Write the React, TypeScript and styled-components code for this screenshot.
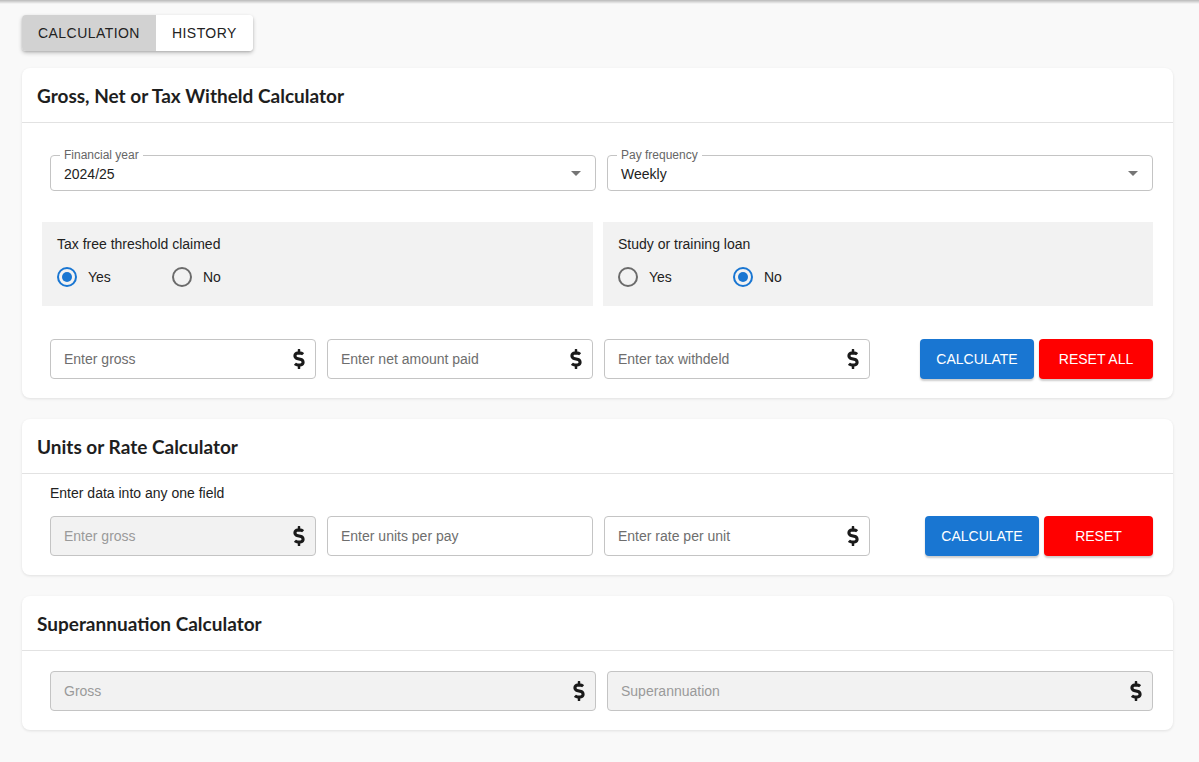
import { createGlobalStyle } from "styled-components";
import styled from "styled-components";
import { FaDollarSign } from "react-icons/fa";

const GlobalStyle = createGlobalStyle`
  html, body {
    margin: 0;
    padding: 0;
    background: #f9f9f9;
    font-family: "Liberation Sans", Arial, sans-serif;
    color: #212121;
  }
  * { box-sizing: border-box; }
`;

const TopShadow = styled.div`
  height: 4px;
  background: linear-gradient(#b9b9b9, #f9f9f9);
`;

const Page = styled.div`
  padding: 11px 26px 30px 22px;
  display: flex;
  flex-direction: column;
`;

const Tabs = styled.div`
  display: flex;
  align-self: flex-start;
  border-radius: 4px;
  overflow: hidden;
  box-shadow: 0 2px 4px rgba(0, 0, 0, 0.22), 0 1px 2px rgba(0, 0, 0, 0.12);
  margin-bottom: 17px;
`;

const Tab = styled.div<{ $active?: boolean }>`
  height: 36px;
  padding: 0 16px;
  display: flex;
  align-items: center;
  font-size: 14px;
  letter-spacing: 0.45px;
  color: #222;
  background: ${(p) => (p.$active ? "#d2d2d2" : "#ffffff")};
`;

const Card = styled.div`
  background: #fff;
  border-radius: 8px;
  box-shadow: 0 1px 3px rgba(0, 0, 0, 0.1);
  margin-bottom: 21px;
`;

const CardHeader = styled.div`
  height: 55px;
  padding: 0 15px;
  display: flex;
  align-items: center;
  border-bottom: 1px solid #e2e2e2;
  font-family: Lato, "Open Sans", sans-serif;
  font-weight: 700;
  font-size: 19px;
  color: #1e1e1e;
`;

const CardBody = styled.div<{ $top: number }>`
  padding: ${(p) => p.$top}px 20px 19px 28px;
  display: flex;
  flex-direction: column;
`;

const TwoCols = styled.div`
  display: grid;
  grid-template-columns: 1fr 1fr;
  gap: 11px;
`;

const Select = styled.div`
  position: relative;
  height: 36px;
  border: 1px solid #c4c4c4;
  border-radius: 4px;
  display: flex;
  align-items: center;
  padding: 2px 13px 0;
  font-size: 14px;
  color: #222;
`;

const FloatLabel = styled.span`
  position: absolute;
  top: -8px;
  left: 9px;
  padding: 0 4px;
  background: #fff;
  font-size: 12px;
  color: #666;
`;

const Arrow = styled.span`
  position: absolute;
  right: 14px;
  top: 15px;
  width: 0;
  height: 0;
  border-left: 5px solid transparent;
  border-right: 5px solid transparent;
  border-top: 5px solid #757575;
`;

const OptionsRow = styled.div`
  display: grid;
  grid-template-columns: 551px 1fr;
  gap: 10px;
  margin: 31px 0 33px -8px;
`;

const OptionBox = styled.div`
  background: #f2f2f2;
  height: 84px;
  padding: 14px 15px 0;
`;

const OptionTitle = styled.div`
  font-size: 14px;
  color: #222;
  margin-bottom: 15px;
`;

const RadioGroup = styled.div`
  display: flex;
`;

const RadioOption = styled.label`
  width: 115px;
  display: flex;
  align-items: center;
  gap: 11px;
  font-size: 14px;
  color: #222;
`;

const RadioCircle = styled.span<{ $checked?: boolean }>`
  width: 20px;
  height: 20px;
  border-radius: 50%;
  border: 2px solid ${(p) => (p.$checked ? "#1976d2" : "#6b6b6b")};
  display: flex;
  align-items: center;
  justify-content: center;
  &::after {
    content: "";
    width: 10px;
    height: 10px;
    border-radius: 50%;
    background: ${(p) => (p.$checked ? "#1976d2" : "transparent")};
  }
`;

const InputsRow = styled.div`
  display: flex;
  align-items: center;
`;

const Fields = styled.div<{ $cols: number }>`
  display: grid;
  grid-template-columns: repeat(${(p) => p.$cols}, 266px);
  gap: 11px;
`;

const Field = styled.div<{ $disabled?: boolean }>`
  height: 40px;
  border: 1px solid #c4c4c4;
  border-radius: 4px;
  background: ${(p) => (p.$disabled ? "#f2f2f2" : "#fff")};
  display: flex;
  align-items: center;
  padding: 0 10px 0 13px;
  font-size: 14px;
  color: ${(p) => (p.$disabled ? "#9a9a9a" : "#6e6e6e")};
`;

const FieldText = styled.span`
  flex: 1;
`;

const Dollar = styled(FaDollarSign)`
  width: 12px;
  height: 20px;
  color: #1a1a1a;
`;

const Buttons = styled.div`
  margin-left: auto;
  display: flex;
  gap: 5px;
`;

const Button = styled.button<{ $color: string; $width: number }>`
  height: 40px;
  width: ${(p) => p.$width}px;
  border: none;
  border-radius: 4px;
  background: ${(p) => p.$color};
  color: #fff;
  font-family: "Liberation Sans", Arial, sans-serif;
  font-size: 14px;
  box-shadow: 0 2px 2px rgba(0, 0, 0, 0.2);
  cursor: pointer;
`;

const Hint = styled.div`
  font-size: 14px;
  color: #222;
  margin-bottom: 15px;
`;

type FieldProps = { label: string; dollar?: boolean; disabled?: boolean };

function InputField({ label, dollar, disabled }: FieldProps) {
  return (
    <Field $disabled={disabled}>
      <FieldText>{label}</FieldText>
      {dollar && <Dollar />}
    </Field>
  );
}

function Radio({ label, checked }: { label: string; checked?: boolean }) {
  return (
    <RadioOption>
      <RadioCircle $checked={checked} />
      {label}
    </RadioOption>
  );
}

export default function App() {
  return (
    <>
      <GlobalStyle />
      <TopShadow />
      <Page>
        <Tabs>
          <Tab $active>CALCULATION</Tab>
          <Tab>HISTORY</Tab>
        </Tabs>

        <Card>
          <CardHeader>Gross, Net or Tax Witheld Calculator</CardHeader>
          <CardBody $top={32}>
            <TwoCols>
              <Select>
                <FloatLabel>Financial year</FloatLabel>
                2024/25
                <Arrow />
              </Select>
              <Select>
                <FloatLabel>Pay frequency</FloatLabel>
                Weekly
                <Arrow />
              </Select>
            </TwoCols>
            <OptionsRow>
              <OptionBox>
                <OptionTitle>Tax free threshold claimed</OptionTitle>
                <RadioGroup>
                  <Radio label="Yes" checked />
                  <Radio label="No" />
                </RadioGroup>
              </OptionBox>
              <OptionBox>
                <OptionTitle>Study or training loan</OptionTitle>
                <RadioGroup>
                  <Radio label="Yes" />
                  <Radio label="No" checked />
                </RadioGroup>
              </OptionBox>
            </OptionsRow>
            <InputsRow>
              <Fields $cols={3}>
                <InputField label="Enter gross" dollar />
                <InputField label="Enter net amount paid" dollar />
                <InputField label="Enter tax withdeld" dollar />
              </Fields>
              <Buttons>
                <Button $color="#1976d2" $width={114}>CALCULATE</Button>
                <Button $color="#ff0000" $width={114}>RESET ALL</Button>
              </Buttons>
            </InputsRow>
          </CardBody>
        </Card>

        <Card>
          <CardHeader>Units or Rate Calculator</CardHeader>
          <CardBody $top={11}>
            <Hint>Enter data into any one field</Hint>
            <InputsRow>
              <Fields $cols={3}>
                <InputField label="Enter gross" dollar disabled />
                <InputField label="Enter units per pay" />
                <InputField label="Enter rate per unit" dollar />
              </Fields>
              <Buttons>
                <Button $color="#1976d2" $width={114}>CALCULATE</Button>
                <Button $color="#ff0000" $width={109}>RESET</Button>
              </Buttons>
            </InputsRow>
          </CardBody>
        </Card>

        <Card>
          <CardHeader>Superannuation Calculator</CardHeader>
          <CardBody $top={20}>
            <TwoCols>
              <InputField label="Gross" dollar disabled />
              <InputField label="Superannuation" dollar disabled />
            </TwoCols>
          </CardBody>
        </Card>
      </Page>
    </>
  );
}
